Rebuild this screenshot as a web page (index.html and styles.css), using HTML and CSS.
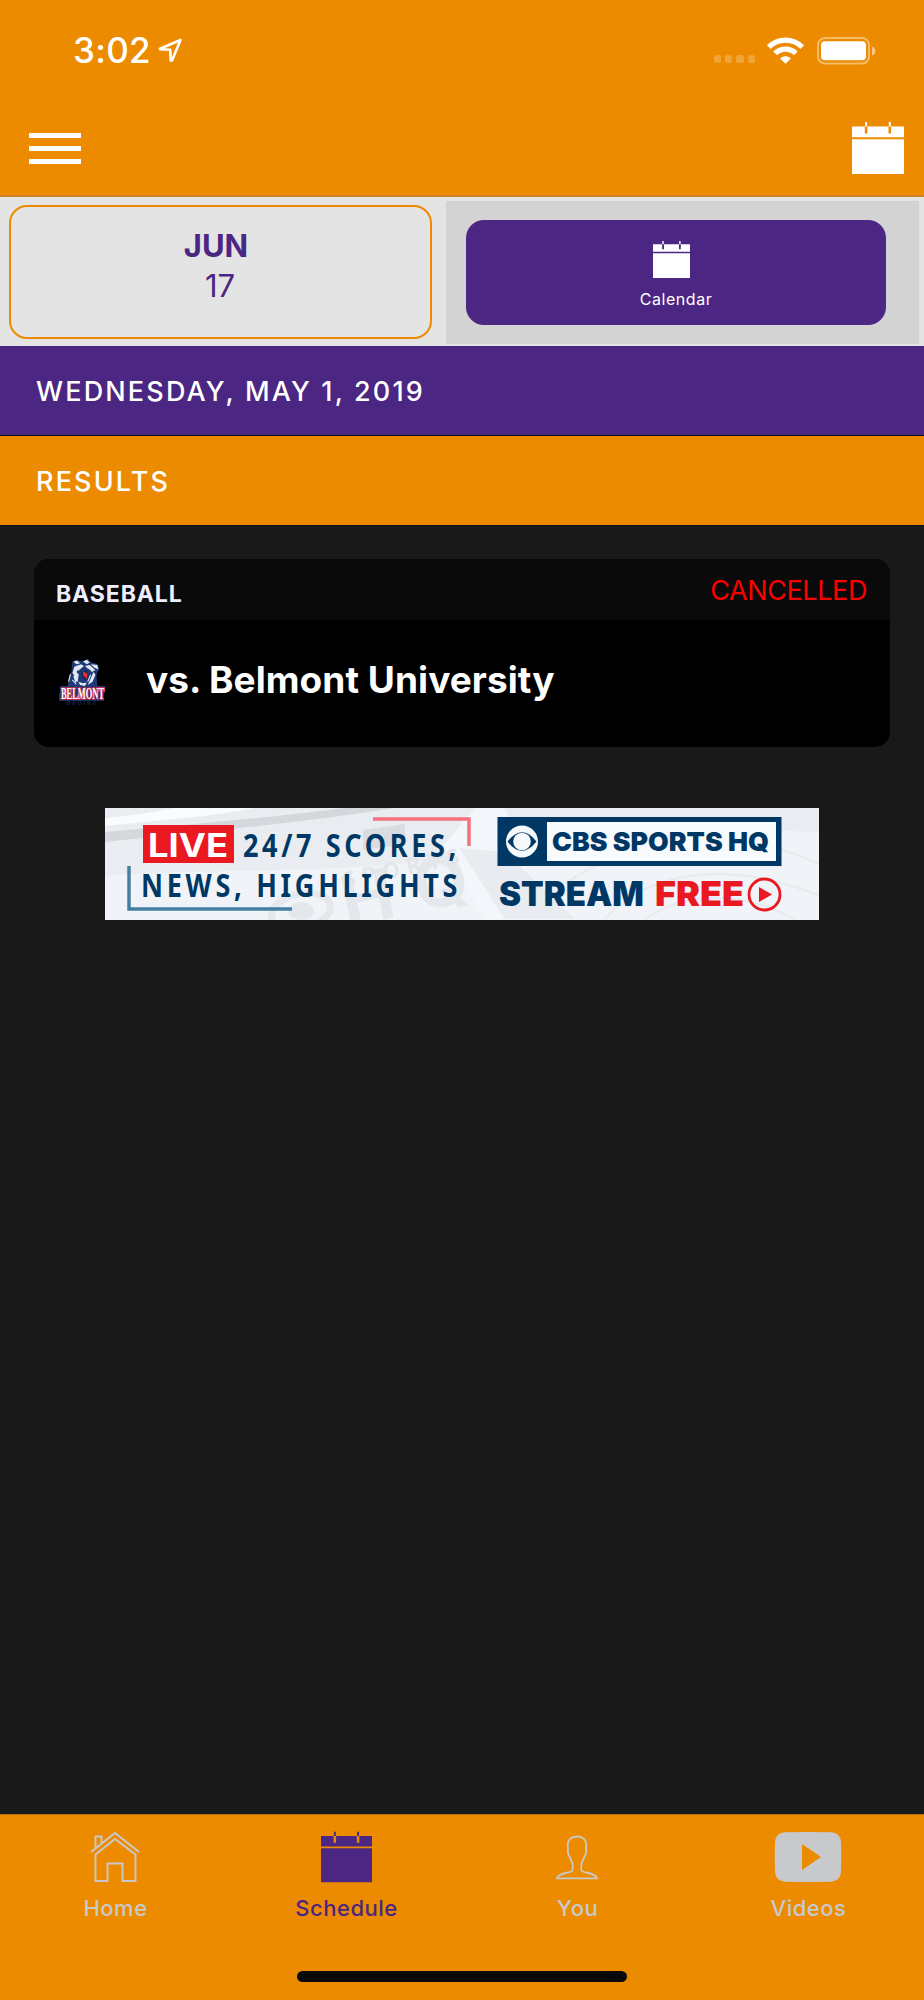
FILE: index.html
```html
<!DOCTYPE html>
<html lang="en">
<head>
    <meta charset="UTF-8">
    <meta name="viewport" content="width=device-width, initial-scale=1.0">
    <title>Schedule</title>
    <link rel="stylesheet" href="styles.css">
</head>
<body>

    <!-- shared calendar icon -->
    <svg width="0" height="0" class="defs">
        <symbol id="calendar" viewBox="0 0 52 52">
            <path d="M0 4.500h12.800v7h2.600v-7h21.100v7h2.600v-7H52v10.700H0zM0 17.200h52V52H0zM13.100 0h2v4.500h-2zM36.800 0h2v4.500h-2z" fill="currentColor"/>
        </symbol>
    </svg>

    <header class="header">
        <div class="status-bar">
            <span class="time">3:02</span>
            <svg class="location" width="25" height="25" viewBox="0 0 25 25">
                <path d="M2 10.800 22.500 2 14 22.500h-1.300l-.5-10.700L2 11.200z" fill="none" stroke="#fff" stroke-width="2.600" stroke-linejoin="round"/>
            </svg>
            <div class="signal"><i></i><i></i><i></i><i></i></div>
            <svg class="wifi" width="37" height="27" viewBox="0 0 37 27">
                <path d="M0 8.200a26 26 0 0 1 37 0l-3.600 3.700a21 21 0 0 0-29.800 0zM6.300 14.600a17.200 17.200 0 0 1 24.400 0L27 18.300a12 12 0 0 0-17 0zM13 21.500a8 8 0 0 1 11 0L18.500 26.800z" fill="#fff"/>
            </svg>
            <svg class="battery" width="59" height="28" viewBox="0 0 59 28">
                <rect x="1" y="1" width="51" height="25.500" rx="7" fill="none" stroke="#fff" stroke-opacity=".42" stroke-width="2"/>
                <rect x="4" y="4.200" width="45" height="19" rx="4" fill="#fff"/>
                <path d="M55 9.500c4.500 1.500 4.500 7.500 0 9z" fill="#fff" fill-opacity=".5"/>
            </svg>
        </div>
        <div class="nav-bar">
            <div class="menu"><i></i><i></i><i></i></div>
            <svg class="nav-calendar" width="52" height="52"><use href="#calendar"/></svg>
        </div>
    </header>

    <section class="days">
        <div class="day">
            <span class="month">JUN</span>
            <span class="date">17</span>
        </div>
        <div class="calendar-panel">
            <div class="calendar-button">
                <svg width="37" height="37"><use href="#calendar"/></svg>
                <span>Calendar</span>
            </div>
        </div>
    </section>

    <div class="bar bar-date"><span>WEDNESDAY, MAY 1, 2019</span></div>
    <div class="bar bar-results"><span>RESULTS</span></div>

    <main class="content">
        <div class="game">
            <div class="game-head">
                <span class="sport">BASEBALL</span>
                <span class="state">CANCELLED</span>
            </div>
            <div class="game-body">
                <svg class="team-logo" width="47" height="47" viewBox="0 0 49 54" preserveAspectRatio="none">
                    <path d="M9 31 13 14 14 3 19 1 24 3 30 0 34 4 40 6 42 11 39 18 40 31z" fill="#1d3a78"/>
                    <path d="M15 3l4-1 3 3-4 1zM25 3l4-2 3 3-3 2zM33 6l7 1 1 5-4-2zM16 9l7-3 3 2-6 4-4 7-2-3zM27 8l5-1 6 6-3 1-5-3zM15 20l3-6 2 4-1 7-2 2zM36 15l2 3-3 8-5 4 2-5zM20 26l5 2 4-1-2 4-5-1z" fill="#e4e8f2"/>
                    <path d="M20 8l-4 6M25 8l-5 5M30 8l5 7M12 17l-2 9M20 17l-1 9M33 18l-3 8M14 24l4 5" stroke="#e4e8f2" stroke-width="1.200"/>
                    <path d="M24 14l5-1 2 6-3 5-4-3z" fill="#142652"/>
                    <path d="M25 14l5 3-1 6-4-4z" fill="#e2283e"/>
                    <path d="M1 31h47v8h-1v9H0v-9h1z" fill="#1d3a78"/>
                    <text x="2" y="46" textLength="45" lengthAdjust="spacingAndGlyphs" class="logo-name">BELMONT</text>
                    <text x="8.500" y="53" textLength="30" class="logo-sub">BRUINS</text>
                </svg>
                <span class="opponent">vs. Belmont University</span>
            </div>
        </div>

        <svg class="ad" width="714" height="112" viewBox="0 0 714 112">
            <rect width="714" height="112" fill="#f0f4f8"/>
            <path d="M0 0h714v25C520 10 400 30 340 48S100 60 0 68z" fill="#e9edf1"/>
            <path d="M0 18C60 12 110 8 150 0h-80Q35 7 0 10z" fill="#fafbfd"/>
            <path d="M0 24C90 16 160 10 240 0h50C190 16 90 24 0 34z" fill="#d4d8dc"/>
            <path d="M338 38 370 0h30l40 111h-60z" fill="#f3f6fa"/>
            <path d="M354 40l46 71h70L400 44z" fill="#e8ebef"/>
            <path d="M258 22l42-6v20l-42 6z" fill="#d9dde1"/>
            <g class="ad-mark">
                <ellipse cx="196" cy="103" rx="30" ry="17" fill="none" stroke="#e4e8ec" stroke-width="7" transform="rotate(-12 196 103)"/>
                <ellipse cx="196" cy="103" rx="13" ry="9"/>
                <text x="242" y="119" textLength="128" class="mark-hq" transform="rotate(-12 242 119)">HQ</text>
                <text x="240" y="80" textLength="118" class="mark-sports" transform="rotate(-12 240 80)">SPORTS</text>
            </g>
            <path d="M500 111c40-45 115-62 214-24M460 76c70-50 170-60 254-20M540 111c40-26 90-30 150 0" fill="none" stroke="#e7ebef" stroke-width="2.500"/>
            <path d="M268 11h96v27" fill="none" stroke="#f4717d" stroke-width="3.500"/>
            <path d="M24 58v43h163" fill="none" stroke="#457f9f" stroke-width="3.500"/>
            <rect x="38" y="17" width="91" height="38" fill="#ea1821"/>
            <text x="43" y="49" textLength="80" lengthAdjust="spacingAndGlyphs" class="ad-live">LIVE</text>
            <text transform="translate(138 49) scale(.82 1)" textLength="260" class="ad-copy">24/7 SCORES,</text>
            <text transform="translate(36 89) scale(.82 1)" textLength="386" class="ad-copy">NEWS, HIGHLIGHTS</text>
            <rect x="392.500" y="9" width="284" height="49" fill="#003865"/>
            <rect x="442" y="14" width="229" height="39" fill="#f8fbfe"/>
            <circle cx="417" cy="33.500" r="16" fill="#f5f9fc"/>
            <path d="M402.500 33.500Q417 15 431.500 33.500 417 52 402.500 33.500z" fill="#003865"/>
            <circle cx="417" cy="33.500" r="8.800" fill="#f5f9fc"/>
            <text x="447" y="43" textLength="217" lengthAdjust="spacingAndGlyphs" class="ad-cbs">CBS SPORTS HQ</text>
            <text x="394" y="98" textLength="145" lengthAdjust="spacingAndGlyphs" class="ad-stream">STREAM</text>
            <text x="550" y="98" textLength="89" lengthAdjust="spacingAndGlyphs" class="ad-stream ad-free">FREE</text>
            <circle cx="659.500" cy="86.500" r="15.500" fill="none" stroke="#ea1821" stroke-width="2.800"/>
            <path d="M654 79v15l13-7.500z" fill="#ea1821"/>
        </svg>
    </main>

    <footer class="tab-bar">
        <nav class="tabs">
            <div class="tab">
                <svg width="50" height="52" viewBox="0 0 50 52">
                    <path d="M1 21 25 2l24 19M5.500 17V5.500h6V12M5.500 50V23.500L25 8l20.500 15.500V50h-13V32.500h-15V50z" fill="none" stroke="currentColor" stroke-width="1.900"/>
                </svg>
                <span>Home</span>
            </div>
            <div class="tab active">
                <svg width="51" height="52" viewBox="0 0 52 52"><use href="#calendar"/></svg>
                <span>Schedule</span>
            </div>
            <div class="tab">
                <svg width="42" height="52" viewBox="0 0 42 52">
                    <path d="M21 5.500c-6 0-9.300 3.500-9.300 8.500l.3 5.500c-.6 1 .3 4.500 1.500 6l3 7c.5 4 .5 6.500-.5 7.500-2 2.500-13 1-15 7.300h40c-2-6.300-13-4.800-15-7.300-1-1-1-3.500-.5-7.500l3-7c1.200-1.500 2.100-5 1.500-6l.3-5.500c0-5-3.300-8.500-9.300-8.500z" fill="none" stroke="currentColor" stroke-width="1.800"/>
                </svg>
                <span>You</span>
            </div>
            <div class="tab">
                <svg width="68" height="52" viewBox="0 0 68 52">
                    <path d="M11 1.300Q34 .5 57 1.300 66.500 1.800 67 11q.7 15 0 30-.8 9-10 9.700-23 .6-46 0Q1.800 50 1 41 .3 26 1 11 1.700 1.800 11 1.300zM28 13v26l19-13z" fill="currentColor" fill-rule="evenodd"/>
                </svg>
                <span>Videos</span>
            </div>
        </nav>
        <div class="home-indicator"></div>
    </footer>

</body>
</html>
```
FILE: styles.css
```css
* { box-sizing: border-box; }
body {
    display: flex;
    flex-direction: column;
    margin: 0;
    width: 924px;
    height: 2000px;
    font-family: Inter, "Liberation Sans", sans-serif;
    background-color: #191919;
    overflow: hidden;
}
svg { display: block; flex: none; }
.defs { position: absolute; }

/* Header */
.header {
    height: 197px;
    background: #ed8b00;
    border-bottom: 2px solid #cd8225;
    color: #fff;
}
.status-bar {
    display: flex;
    height: 101px;
    padding: 0 48px 0 73px;
    align-items: center;
}
.time {
    margin-top: -1px;
    font-size: 35px;
    font-weight: 550;
    letter-spacing: 0.3px;
}
.location { margin-left: 7px; }
.signal {
    display: flex;
    gap: 4px;
    margin: 17px 12px 0 auto;
}
.signal i {
    width: 7.3px;
    height: 7.5px;
    border-radius: 2.5px;
    background: rgba(255, 255, 255, 0.22);
}
.wifi { margin: -1px 13px 0 0; }
.nav-bar {
    display: flex;
    justify-content: space-between;
    padding: 21px 20px 0 29px;
}
.menu {
    display: flex;
    flex-direction: column;
    gap: 8.5px;
    padding-top: 11px;
}
.menu i {
    width: 52px;
    height: 4.5px;
    background: #fff;
}

/* Day selector */
.days {
    display: flex;
    height: 149px;
    padding: 4px 5px 2px 9px;
    background: #e4e4e4;
    color: #4b2682;
}
.day {
    display: flex;
    flex-direction: column;
    align-items: center;
    width: 423px;
    height: 134px;
    margin: 4px 14px 0 0;
    padding-top: 19px;
    border: 2px solid #ed8b00;
    border-radius: 18px;
    font-size: 31px;
    line-height: 40px;
}
.month { font-weight: 700; margin-right: 9px; }
.date { font-weight: 400; margin-right: 1px; }
.calendar-panel {
    width: 473px;
    padding: 19px 33px 0 20px;
    background: #d3d3d3;
}
.calendar-button {
    display: flex;
    flex-direction: column;
    align-items: center;
    height: 105px;
    padding-top: 21px;
    border-radius: 18px;
    background: #4b2682;
    color: #fff;
    font-size: 16px;
    letter-spacing: 0.55px;
}
.calendar-button svg { margin-right: 10px; }
.calendar-button span { margin-top: 11px; line-height: 20px; }

/* Section bars */
.bar {
    height: 90px;
    padding-left: 36px;
    border-bottom: 1px solid #10091c;
    color: #fff;
    font-size: 27px;
    font-weight: 450;
    line-height: 91px;
    letter-spacing: 2.15px;
}
.bar-date { background: #4b2682; }
.bar-results { background: #ed8b00; }

/* Game card */
.content { flex: 1; padding: 33px 34px 0; }
.game {
    height: 188px;
    border-radius: 15px;
    background: #000;
    overflow: hidden;
}
.game-head {
    display: flex;
    justify-content: space-between;
    height: 61px;
    padding: 0 23px 0 22px;
    background: #0a0a0a;
}
.sport {
    color: #efeeff;
    font-size: 23px;
    font-weight: 650;
    line-height: 71px;
    letter-spacing: 0.9px;
}
.state {
    color: #f00;
    font-size: 27px;
    font-weight: 400;
    line-height: 63px;
    letter-spacing: -0.4px;
}
.game-body {
    display: flex;
    align-items: center;
    height: 120px;
    padding-left: 25px;
}
.team-logo { margin-top: 5px; }
.opponent {
    margin-left: 40px;
    color: #fff;
    font-size: 37px;
    font-weight: 650;
    line-height: 50px;
    letter-spacing: 0.05px;
}
.logo-name {
    font: bold 18px "Liberation Serif", serif;
    fill: #fff;
    stroke: #e2283e;
    stroke-width: 2px;
    paint-order: stroke;
}
.logo-sub { font: bold 5px Inter, sans-serif; fill: #0f2558; }

/* Ad banner */
.ad { margin: 61px 0 0 71px; }
.ad text { font-family: "Noto Sans", sans-serif; font-weight: 700; }
.ad-mark { fill: #e4e8ec; }
.ad .mark-hq { font-family: Inter, sans-serif; font-size: 70px; }
.ad .mark-sports { font-size: 22px; fill: #e2e6ea; }
.ad .ad-live { font-family: Inter, sans-serif; font-size: 33px; fill: #fff; }
.ad .ad-copy { font-size: 33px; fill: #003865; }
.ad .ad-cbs { font-family: Inter, sans-serif; font-size: 26px; font-weight: 900; fill: #003865; }
.ad .ad-stream { font-family: Inter, sans-serif; font-size: 34px; font-weight: 900; fill: #003865; }
.ad .ad-free { fill: #ea1821; }

/* Tab bar */
.tab-bar {
    height: 186px;
    background: #ed8b00;
    border-top: 1px solid #b56f0c;
}
.tabs { display: flex; padding-top: 16px; }
.tab {
    display: flex;
    flex-direction: column;
    align-items: center;
    flex: 1;
    color: #c7c9cc;
    font-size: 22px;
    font-weight: 450;
    letter-spacing: 0.5px;
}
.tab svg { margin-right: 1px; }
.tab span { margin-top: 10px; line-height: 30px; }
.active { color: #4b2682; }
.home-indicator {
    width: 330px;
    height: 11px;
    margin: 48px auto 0;
    border-radius: 6px;
    background: #080808;
}
```
